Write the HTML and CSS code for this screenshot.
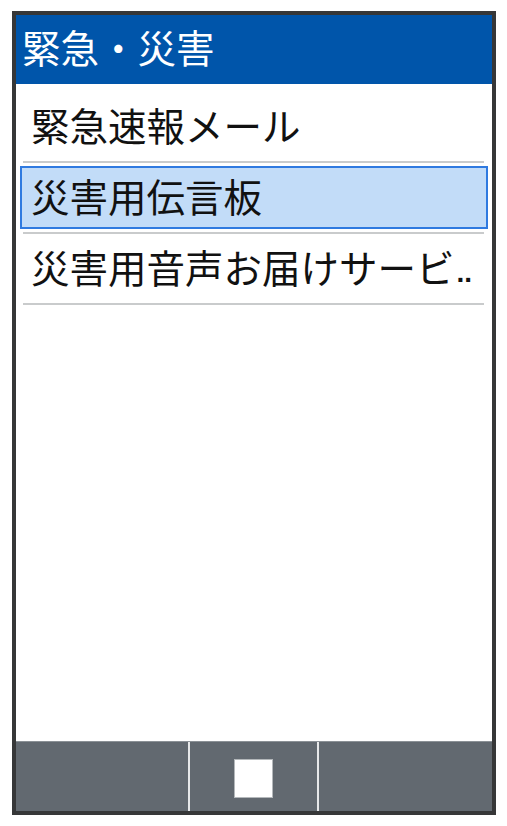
FILE: index.html
```html
<!DOCTYPE html>
<html lang="ja">
<head>
    <meta http-equiv="Content-Type" content="text/html; charset=UTF-8">
    <meta name="viewport" content="width=device-width, initial-scale=1.0">
    <title>緊急・災害</title>
    <link rel="stylesheet" href="styles.css">
</head>
<body>
    <div class="phone">
        <div class="header">緊急・災害</div>
        <div class="list">
            <div class="row">
                <div class="item">緊急速報メール</div>
            </div>
            <div class="row">
                <div class="item selected">災害用伝言板</div>
            </div>
            <div class="row">
                <div class="item">災害用音声お届けサービ<span class="dots">..</span></div>
            </div>
        </div>
        <div class="softkeys">
            <div class="key"></div>
            <div class="key"><span class="center-btn"></span></div>
            <div class="key"></div>
        </div>
    </div>
</body>
</html>
```

FILE: styles.css
```css
body {
    margin: 0;
    background-color: #fff;
    font-family: "Noto Sans CJK JP", "Noto Sans", sans-serif;
}

.phone {
    box-sizing: border-box;
    width: 484px;
    height: 804px;
    margin: 11px 0 0 12px;
    border: 4px solid #363738;
    display: flex;
    flex-direction: column;
    background-color: #fff;
}

.header {
    box-sizing: border-box;
    height: 69px;
    background-color: #0055aa;
    color: #fff;
    font-size: 38.5px;
    line-height: 63px;
    padding-left: 6px;
    white-space: nowrap;
}

.list {
    flex: 1;
    padding: 8px 4px 0 4px;
}

.row {
    padding: 3px 0;
    position: relative;
}

.row::after {
    content: "";
    position: absolute;
    left: 3px;
    right: 4px;
    bottom: -2px;
    height: 2px;
    background-color: #c9cbcc;
}

.row + .row {
    margin-top: 2px;
}

.item {
    box-sizing: border-box;
    height: 63px;
    display: flex;
    align-items: center;
    padding: 0 0 6px 9px;
    border: 2px solid transparent;
    color: #111;
    font-size: 38.5px;
    white-space: nowrap;
    overflow: hidden;
}

.item.selected {
    background-color: #c2dcf8;
    border-color: #2f7ae0;
}

.dots {
    font-family: "Liberation Sans", sans-serif;
    font-size: 28px;
    font-weight: bold;
    margin-left: 2px;
    align-self: flex-end;
    padding-bottom: 3px;
}

.softkeys {
    height: 70px;
    box-sizing: border-box;
    border-top: 1px solid #8b9196;
    display: grid;
    grid-template-columns: 172px 127px 1fr;
    gap: 2px;
    background-color: #e6e8e9;
}

.key {
    background-color: #626970;
    display: flex;
    align-items: center;
    justify-content: center;
    padding-top: 4px;
}

.center-btn {
    box-sizing: border-box;
    width: 39px;
    height: 39px;
    background-color: #fff;
    border: 1px solid #b4b8bb;
}
```
